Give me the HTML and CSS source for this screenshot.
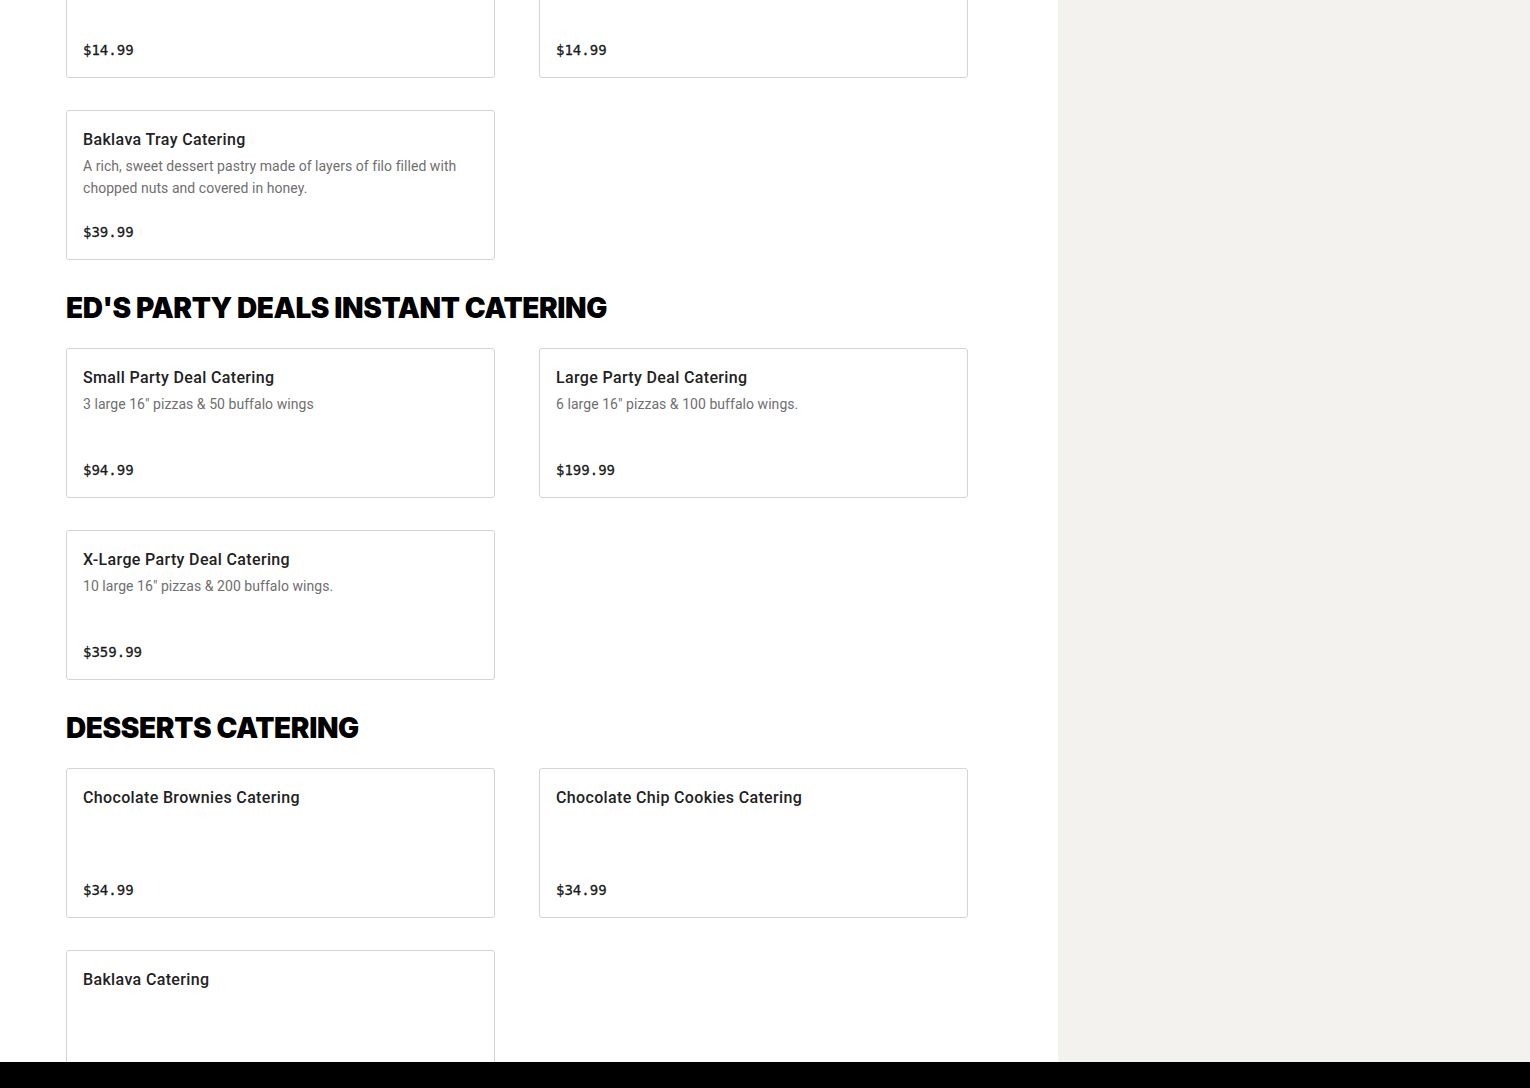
FILE: index.html
```html
<!DOCTYPE html>
<html lang="en">
<head>
    <meta charset="UTF-8">
    <meta name="viewport" content="width=device-width, initial-scale=1.0">
    <title>Catering Menu</title>
    <link rel="stylesheet" href="styles.css">
</head>
<body>
    <div class="page">
        <main class="menu">
            <section class="category">
                <div class="items">
                    <div class="item">
                        <h3>Hummus Tray Catering</h3>
                        <p class="price">$14.99</p>
                    </div>
                    <div class="item">
                        <h3>Greek Salad Catering</h3>
                        <p class="price">$14.99</p>
                    </div>
                    <div class="item">
                        <h3>Baklava Tray Catering</h3>
                        <p class="desc">A rich, sweet dessert pastry made of layers of filo filled with chopped nuts and covered in honey.</p>
                        <p class="price">$39.99</p>
                    </div>
                </div>
            </section>

            <section class="category">
                <h2>Ed's Party Deals Instant Catering</h2>
                <div class="items">
                    <div class="item">
                        <h3>Small Party Deal Catering</h3>
                        <p class="desc">3 large 16" pizzas &amp; 50 buffalo wings</p>
                        <p class="price">$94.99</p>
                    </div>
                    <div class="item">
                        <h3>Large Party Deal Catering</h3>
                        <p class="desc">6 large 16" pizzas &amp; 100 buffalo wings.</p>
                        <p class="price">$199.99</p>
                    </div>
                    <div class="item">
                        <h3>X-Large Party Deal Catering</h3>
                        <p class="desc">10 large 16" pizzas &amp; 200 buffalo wings.</p>
                        <p class="price">$359.99</p>
                    </div>
                </div>
            </section>

            <section class="category">
                <h2>Desserts Catering</h2>
                <div class="items">
                    <div class="item">
                        <h3>Chocolate Brownies Catering</h3>
                        <p class="price">$34.99</p>
                    </div>
                    <div class="item">
                        <h3>Chocolate Chip Cookies Catering</h3>
                        <p class="price">$34.99</p>
                    </div>
                    <div class="item">
                        <h3>Baklava Catering</h3>
                        <p class="price">$34.99</p>
                    </div>
                </div>
            </section>
        </main>
        <aside class="cart"></aside>
    </div>
    <div class="bottom-bar"></div>
</body>
</html>
```

FILE: styles.css
```css
html, body {
    margin: 0;
    padding: 0;
    height: 100%;
    overflow: hidden;
}

body {
    font-family: Roboto, "Liberation Sans", sans-serif;
    background-color: #ffffff;
    color: #222222;
}

.page {
    display: flex;
    min-height: 100%;
}

/* the list is scrolled down a little, so the first row is cut off */
.menu {
    width: 1058px;
    flex-shrink: 0;
    box-sizing: border-box;
    padding: 0 90px 0 66px;
    margin-top: -72px;
}

.cart {
    flex: 1;
    background-color: #f3f2ee;
}

.category h2 {
    margin: 32px 0 24px;
    font-family: Inter, "Liberation Sans", sans-serif;
    font-weight: 900;
    font-size: 28px;
    line-height: 32px;
    letter-spacing: -0.4px;
    text-transform: uppercase;
    color: #000000;
}

.items {
    display: grid;
    grid-template-columns: 429px 429px;
    column-gap: 44px;
    row-gap: 32px;
}

.item {
    display: flex;
    flex-direction: column;
    box-sizing: border-box;
    min-height: 150px;
    padding: 17px 16px 15px;
    border: 1px solid #d4d4d4;
    border-radius: 3px;
}

.item h3 {
    margin: 0;
    font-size: 16px;
    font-weight: 500;
    line-height: 24px;
    letter-spacing: 0.35px;
    color: #222222;
}

.item .desc {
    margin: 3px 0 0;
    font-size: 14px;
    line-height: 22px;
    letter-spacing: 0.05px;
    color: #6f6f6f;
}

.item .price {
    margin: auto 0 0;
    font-family: "DejaVu Sans Mono", "Liberation Mono", monospace;
    font-size: 14px;
    line-height: 24px;
    color: #1a1a1a;
    -webkit-text-stroke: 0.3px #1a1a1a;
}

.bottom-bar {
    position: fixed;
    left: 0;
    right: 0;
    bottom: 0;
    height: 26px;
    background-color: #000000;
}
```
